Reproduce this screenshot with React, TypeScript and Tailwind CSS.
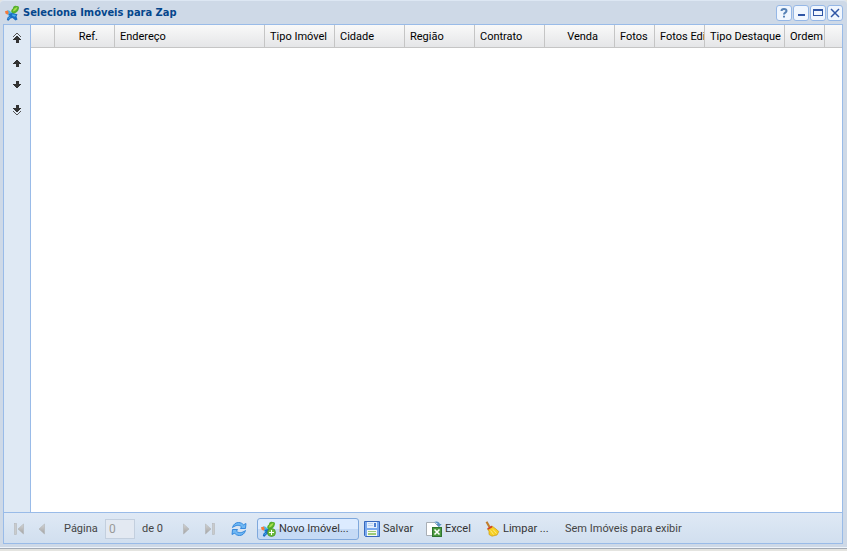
import React from "react";

const Butterfly = ({ plus = false }: { plus?: boolean }) => (
  <svg width="16" height="16" viewBox="0 0 16 16" className="shrink-0" aria-hidden="true">
    <path d="M7.5 8C6.5 5.500 8 4 9 3.500 9 1.500 10.500.3 12.500 1 14.500.6 15.500 2 14.800 3.800 14.500 6.500 12 8 9.500 9Z" fill="#55b02c" />
    <path d="M9 6.500C9 4.500 11 2 13.500 2.200 13 4.500 11.500 6 9 6.500Z" fill="#a6dc4c" />
    <path d="M3.500 5 5.500 5.800 9 8.500 8 11 4 10.500Z" fill="#49b8ec" />
    <path d="M1 6.200 3.800 5.500 4.800 8 3.500 9.800 1.500 8.500Z" fill="#f47a3c" />
    <path d="M4.500 9 8 8 13.500 9.200 12.500 11.500 13.500 14.500 11.500 15.500 8.500 13 6.500 13.500 4.500 15.800 2.800 15 3.500 12.500 5.500 10.800Z" fill="#1a6ec4" />
    <path d="M8 9.200 12 10 11 11.800 8.500 11ZM4 14 4.500 12.800 6.500 11.500 6 13Z" fill="#48b0ee" />
    {plus && (
      <>
        <circle cx="11.500" cy="11.500" r="4" fill="#6cbc3c" stroke="#468f28" strokeWidth="0.700" />
        <path d="M11 9h1v2h2v1h-2v2h-1v-2H9v-1h2z" fill="#fff" />
      </>
    )}
  </svg>
);

const MoveArrow = ({ double = false, down = false }: { double?: boolean; down?: boolean }) => (
  <svg width="16" height="16" viewBox="0 0 16 16" shapeRendering="crispEdges" className={down ? "-scale-y-100" : ""} aria-hidden="true">
    <path d="M7 5h2v1h1v1h1v1h1v1H9.500v3h-3V9H4V8h1V7h1V6h1z" fill="#333" />
    {double && <path d="M7 2h2v1H7zM6 3h1v1H6zM9 3h1v1H9zM5 4h1v1H5zM10 4h1v1h-1zM4 5h1v1H4zM11 5h1v1h-1z" fill="#555" />}
  </svg>
);

const PageArrow = ({ flip = false, bar = false }: { flip?: boolean; bar?: boolean }) => (
  <svg width="16" height="16" viewBox="0 0 16 16" className={flip ? "-scale-x-100" : ""} aria-hidden="true">
    <defs>
      <linearGradient id="grey" x1="0" y1="0" x2="0" y2="1">
        <stop offset="0" stopColor="#d4d4d4" />
        <stop offset="1" stopColor="#a2a2a2" />
      </linearGradient>
    </defs>
    <path d={bar ? "M11.500 3v10L6 8z" : "M10.500 3v10L5 8z"} fill="url(#grey)" stroke="#b0b3b6" strokeWidth="0.600" />
    {bar && <rect x="2.500" y="2.500" width="2" height="11" fill="#c9cbcd" stroke="#b4b7ba" strokeWidth="0.600" />}
  </svg>
);

const Refresh = () => (
  <svg width="16" height="16" viewBox="0 0 16 16" aria-hidden="true">
    <g fill="#6fb8f4" stroke="#2a80d8" strokeWidth="0.900" strokeLinejoin="round">
      <path d="M1.500 6.500C2.500 3 5 1.500 7.500 1.500 9.800 1.500 11.500 2.600 12.500 3.800L15 2.500 14.500 7.500H9.500L10.500 5.800C8.500 3.800 5 3.800 1.500 6.500Z" />
      <path d="M14.500 9.500C13.500 13 11 14.500 8.500 14.500 6.200 14.500 4.500 13.400 3.500 12.200L1 13.500 1.500 8.500H6.500L5.500 10.200C7.500 12.200 11 12.200 14.500 9.500Z" />
    </g>
  </svg>
);

const Floppy = () => (
  <svg width="16" height="16" viewBox="0 0 16 16" aria-hidden="true">
    <path d="M.5.5h15v15h-14l-1-1z" fill="#7aa9ee" stroke="#3768bd" />
    <rect x="3" y="1" width="10" height="6" fill="#e4effc" />
    <path d="M4 2h5v1H4zM4 4h5v1H4z" fill="#bdd3f0" />
    <rect x="10" y="2" width="2" height="4" fill="#4a7ed2" />
    <rect x="3" y="9" width="10" height="6" fill="#f6f9f2" />
    <path d="M4 10h8v1H4zM4 12h8v2H4z" fill="#9ccb78" />
  </svg>
);

const ExcelIcon = () => (
  <svg width="16" height="16" viewBox="0 0 16 16" aria-hidden="true">
    <path d="M.5 1.500h8l4 4v9H.5z" fill="#fff" stroke="#a9afb6" />
    <path d="M7.500 1.500C10-.2 13.500.5 13.800 3H15.800L13 6 10 3H11.800C11 1.800 9.500 1.300 7.500 1.500z" fill="#5c93c4" />
    <rect x="6.500" y="6.500" width="9" height="9" fill="#4c9a3e" stroke="#2f7430" />
    <path d="M8.500 8.500l5 5M13.500 8.500l-5 5" stroke="#fff" strokeWidth="1.600" />
  </svg>
);

const Broom = () => (
  <svg width="16" height="16" viewBox="0 0 16 16" aria-hidden="true">
    <path d="M2.500.8 5.500 6" stroke="#c07e2c" strokeWidth="2.200" />
    <path d="M3.500 8 8 5 12 8 14.800 10.500 13 14 8 15.200 5 13.500 5 10.500z" fill="#f6cf22" stroke="#cc9a18" strokeWidth="0.700" />
    <path d="M3.200 7.200 7.500 4.800 8.500 6.200 4.200 8.800z" fill="#d04028" />
    <path d="M6.500 9.500l3 4M9 8.500l3.500 4" stroke="#fcec8e" strokeWidth="0.900" />
  </svg>
);

const columns = [
  { label: "", width: "w-[24px]", align: "text-left" },
  { label: "Ref.", width: "w-[60px]", align: "text-right pr-4" },
  { label: "Endereço", width: "w-[150px]", align: "text-left" },
  { label: "Tipo Imóvel", width: "w-[70px]", align: "text-left" },
  { label: "Cidade", width: "w-[70px]", align: "text-left" },
  { label: "Região", width: "w-[70px]", align: "text-left" },
  { label: "Contrato", width: "w-[70px]", align: "text-left" },
  { label: "Venda", width: "w-[70px]", align: "text-right pr-4" },
  { label: "Fotos", width: "w-[40px]", align: "text-left" },
  { label: "Fotos Edi", width: "w-[50px]", align: "text-left" },
  { label: "Tipo Destaque", width: "w-[80px]", align: "text-left" },
  { label: "Ordem", width: "w-[40px]", align: "text-left" },
];

const windowTools = [
  { label: "Ajuda", shape: <path d="M4.500 5C4.500 2.200 9.500 2.200 9.500 5 9.500 6.800 7 6.500 7 8.500M7 9.800v1.700" fill="none" stroke="#5580b4" strokeWidth="2" /> },
  { label: "Minimizar", shape: <path d="M4 8h7v2H4z" fill="#2f55a5" /> },
  { label: "Maximizar", shape: <path d="M2 3h10v7H2zM3 5v4h8V5z" fillRule="evenodd" fill="#2f55a5" /> },
  { label: "Fechar", shape: <path d="M3 3l8 8M11 3l-8 8" stroke="#2f55a5" strokeWidth="1.500" /> },
];

export default function App() {
  return (
    <div className="flex h-screen flex-col bg-[#e4e4e0] pb-[2px] font-['Roboto',sans-serif] text-[11px] leading-4">
      <div className="flex min-h-0 flex-1 flex-col border-b border-[#a3abb6]">
        <main className="flex min-h-0 flex-1 flex-col rounded-t border-y border-t-[#dde7f3] border-b-[#eef4fb] bg-[#ced9e7] pr-1 pb-[3px] pl-[3px]">
          <header className="flex h-[23px] items-center gap-[3px] pl-px">
            <Butterfly />
            <h1 className="flex-1 font-['DejaVu_Sans_Condensed','DejaVu_Sans',sans-serif] font-bold text-[#04468c]">
              Seleciona Imóveis para Zap
            </h1>
            <div className="flex gap-px">
              {windowTools.map((t) => (
                <button key={t.label} aria-label={t.label} className="size-4 rounded-[3px] border border-[#95b7e6] bg-[#f0f6fe]">
                  <svg width="14" height="14" viewBox="0 0 14 14" aria-hidden="true">{t.shape}</svg>
                </button>
              ))}
            </div>
          </header>
          <div className="flex min-h-0 flex-1 flex-col border border-[#99bbe8]">
            <div className="flex min-h-0 flex-1">
              <nav className="flex w-[27px] flex-col items-center gap-[6px] border-r border-[#99bbe8] bg-[#dfe9f4] pt-[6px]">
                <div className="flex flex-col gap-2">
                  <button aria-label="Mover para o topo"><MoveArrow double /></button>
                  <button aria-label="Mover para cima"><MoveArrow /></button>
                </div>
                <div className="flex flex-col gap-2">
                  <button aria-label="Mover para baixo"><MoveArrow down /></button>
                  <button aria-label="Mover para o fim"><MoveArrow down double /></button>
                </div>
              </nav>
              <div className="min-w-0 flex-1 bg-white">
                <table className="w-full table-fixed border-separate border-spacing-0 text-black">
                  <thead>
                    <tr className="h-[23px] bg-linear-to-b from-[#f9f9f9] to-[#e4e5e7]">
                      {columns.map((c, i) => (
                        <th key={i} className={`${c.width} ${c.align} overflow-hidden border-r border-b border-[#c5c5c5] pt-[2px] pl-[5px] font-normal whitespace-nowrap`}>
                          {c.label}
                        </th>
                      ))}
                      <th className="border-b border-[#c5c5c5]" />
                    </tr>
                  </thead>
                </table>
              </div>
            </div>
            <footer className="flex h-[31px] items-center border-t border-[#99bbe8] bg-linear-to-b from-[#dfe9f5] to-[#d1dfef] pt-px leading-[18px] whitespace-nowrap text-[#444]">
              <button className="ml-2" aria-label="Primeira página"><PageArrow bar /></button>
              <button className="ml-[6px]" aria-label="Página anterior"><PageArrow /></button>
              <label htmlFor="page" className="ml-[14px] w-[41px]">Página</label>
              <input id="page" disabled defaultValue="0" className="h-5 w-[30px] border border-[#c3cfde] bg-[#e3e9f2] px-[3px] text-[12px] text-[#999]" />
              <span className="ml-[7px] w-9">de 0</span>
              <button aria-label="Próxima página"><PageArrow flip /></button>
              <button className="ml-[7px]" aria-label="Última página"><PageArrow flip bar /></button>
              <button className="ml-[14px]" aria-label="Atualizar"><Refresh /></button>
              <button className="ml-[10px] flex h-[22px] w-[102px] items-center gap-[3px] rounded-[3px] border border-[#7fa8dc] bg-linear-to-b from-[#dcebff] from-50% to-[#c5daf5] to-50% pl-[2px] text-[#333]">
                <Butterfly plus />Novo Imóvel...
              </button>
              <button className="ml-[5px] flex w-[62px] items-center gap-[3px] text-[#333]"><Floppy />Salvar</button>
              <button className="flex w-[58px] items-center gap-[3px] text-[#333]"><ExcelIcon />Excel</button>
              <button className="flex w-[81px] items-center gap-[3px] text-[#333]"><Broom />Limpar ...</button>
              <span>Sem Imóveis para exibir</span>
            </footer>
          </div>
        </main>
      </div>
    </div>
  );
}
